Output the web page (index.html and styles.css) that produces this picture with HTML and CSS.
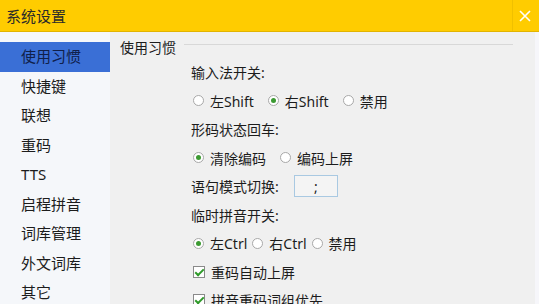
FILE: index.html
```html
<!DOCTYPE html>
<html lang="zh-CN">
    <head>
        <meta charset="utf-8">
        <title>系统设置</title>
        <link rel="stylesheet" href="styles.css">
    </head>
    <body>
        <header class="titlebar">
            <span class="title">系统设置</span>
            <span class="close">
                <svg width="14" height="14" viewBox="0 0 14 14"><path d="M2 2 L12 12 M12 2 L2 12" stroke="#fff" stroke-width="1.6"/></svg>
            </span>
        </header>
        <div class="main">
            <ul class="sidebar">
                <li class="active">使用习惯</li>
                <li>快捷键</li>
                <li>联想</li>
                <li>重码</li>
                <li>TTS</li>
                <li>启程拼音</li>
                <li>词库管理</li>
                <li>外文词库</li>
                <li>其它</li>
            </ul>
            <div class="content">
                <div class="group-title"><span>使用习惯</span><i class="rule"></i></div>
                <div class="rows">
                    <div class="row">输入法开关:</div>
                    <div class="row">
                        <span class="opt"><i class="radio"></i>左Shift</span>
                        <span class="opt"><i class="radio on"></i>右Shift</span>
                        <span class="opt"><i class="radio"></i>禁用</span>
                    </div>
                    <div class="row">形码状态回车:</div>
                    <div class="row">
                        <span class="opt"><i class="radio on"></i>清除编码</span>
                        <span class="opt"><i class="radio"></i>编码上屏</span>
                    </div>
                    <div class="row">语句模式切换: <span class="keybox">;</span></div>
                    <div class="row">临时拼音开关:</div>
                    <div class="row tight">
                        <span class="opt"><i class="radio on"></i>左Ctrl</span>
                        <span class="opt"><i class="radio"></i>右Ctrl</span>
                        <span class="opt"><i class="radio"></i>禁用</span>
                    </div>
                    <div class="row"><span class="opt"><i class="check"></i>重码自动上屏</span></div>
                    <div class="row"><span class="opt"><i class="check"></i>拼音重码词组优先</span></div>
                </div>
            </div>
            <div class="edge"></div>
        </div>
    </body>
</html>
```

FILE: styles.css
```css
* {
    box-sizing: border-box;
}

body {
    margin: 0;
    width: 539px;
    height: 304px;
    overflow: hidden;
    font-family: "Noto Sans", "Noto Sans CJK SC", sans-serif;
    font-size: 14px;
    color: #1c1c1c;
    background-color: #f0f0f0;
}

.titlebar {
    height: 32px;
    background-color: #ffcc00;
    border-bottom: 1px solid #e2b400;
    display: flex;
    align-items: center;
    justify-content: space-between;
}

.title {
    padding-left: 6px;
    font-size: 15px;
    color: #2a2a2a;
}

.close {
    width: 24px;
    height: 31px;
    display: flex;
    align-items: center;
    justify-content: center;
    border-left: 1px solid #f0c000;
    margin-right: 3px;
}

.main {
    display: flex;
    height: 272px;
}

.sidebar {
    list-style: none;
    margin: 0;
    padding: 10px 0 0 0;
    width: 110px;
    background-color: #f5f7fa;
}

.sidebar li {
    height: 29.5px;
    line-height: 29.5px;
    padding-left: 21px;
    font-size: 15px;
}

.sidebar li.active {
    background-color: #3a6fd6;
    color: #10204a;
}

.content {
    flex: 1;
    padding: 5px 0 0 10px;
}

.group-title {
    display: flex;
    align-items: center;
    height: 20px;
    font-size: 14px;
}

.group-title .rule {
    flex: 1;
    height: 1px;
    background-color: #d8d8d8;
    margin: 0 22px 0 8px;
    position: relative;
    top: -3px;
}

.rows {
    padding: 1px 0 0 71px;
}

.row {
    height: 28.5px;
    display: flex;
    align-items: center;
    gap: 12px;
}

.row.tight {
    gap: 3px;
}

.opt {
    display: flex;
    align-items: center;
    gap: 6px;
}

.radio {
    width: 11px;
    height: 11px;
    border-radius: 50%;
    border: 1px solid #a8a8a8;
    background-color: #fff;
    display: flex;
    align-items: center;
    justify-content: center;
    margin-left: 2px;
}

.radio.on::after {
    content: "";
    width: 5px;
    height: 5px;
    border-radius: 50%;
    background-color: #3c9a32;
}

.check {
    width: 12px;
    height: 12px;
    border: 1px solid #8a8a8a;
    background-color: #fff;
    margin-left: 2px;
    position: relative;
}

.check::after {
    content: "";
    position: absolute;
    left: 3px;
    top: 0px;
    width: 3px;
    height: 7px;
    border: solid #2f9a2a;
    border-width: 0 2px 2px 0;
    transform: rotate(45deg);
}

.keybox {
    width: 44px;
    height: 22px;
    border: 1px solid #a9c9e2;
    background-color: #f4f4f4;
    display: flex;
    align-items: center;
    justify-content: center;
    margin-left: 3px;
}

.edge {
    width: 4px;
    background-color: #f6f6fa;
}
```
